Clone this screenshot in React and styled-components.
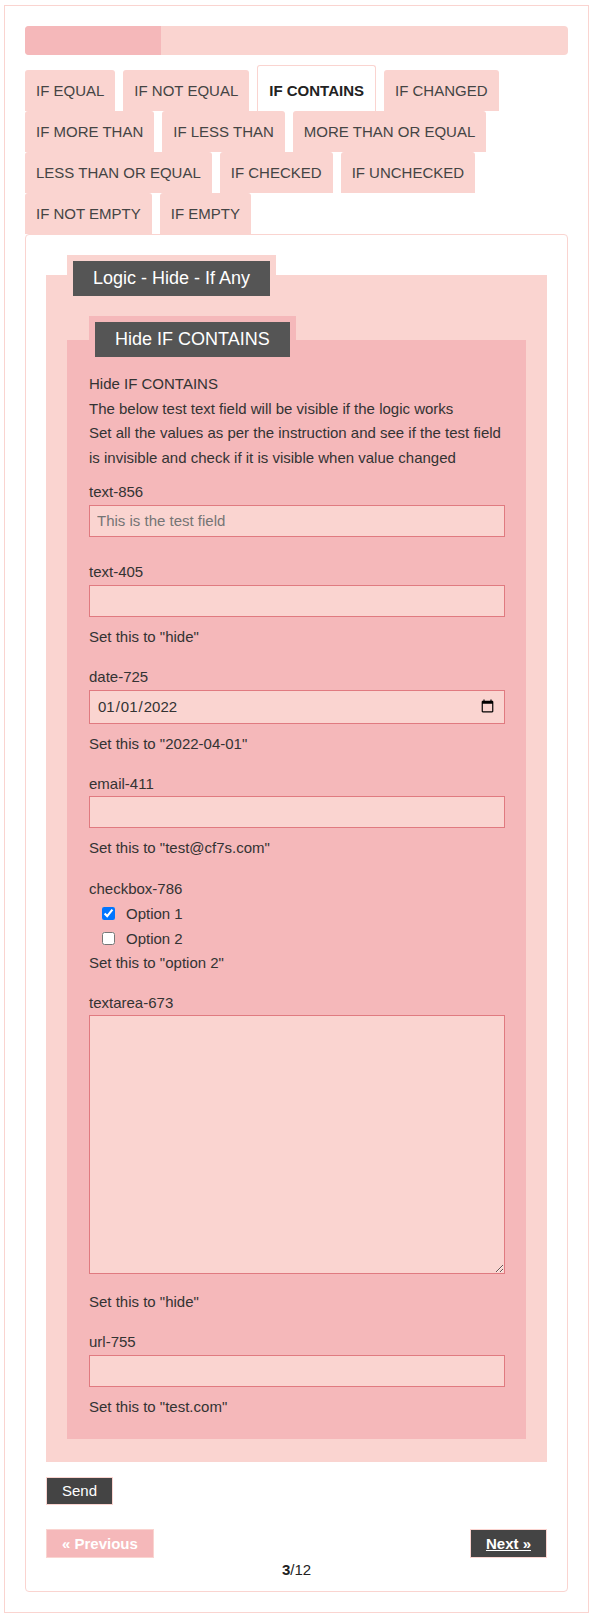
import React from "react";
import styled, { createGlobalStyle } from "styled-components";

const tabs = [
    "IF EQUAL",
    "IF NOT EQUAL",
    "IF CONTAINS",
    "IF CHANGED",
    "IF MORE THAN",
    "IF LESS THAN",
    "MORE THAN OR EQUAL",
    "LESS THAN OR EQUAL",
    "IF CHECKED",
    "IF UNCHECKED",
    "IF NOT EMPTY",
    "IF EMPTY",
];

function App() {
    return (
        <>
            <GlobalStyle />
            <Frame>
                <Progress>
                    <ProgressFill style={{ width: `${(3 / 12) * 100}%` }} />
                </Progress>
                <TabList>
                    {tabs.map((t) => (
                        <Tab key={t} $active={t === "IF CONTAINS"}>
                            {t}
                        </Tab>
                    ))}
                </TabList>
                <Panel>
                    <OuterSet>
                        <OuterLegend>
                            <LegendBox>Logic - Hide - If Any</LegendBox>
                        </OuterLegend>
                        <InnerSet>
                            <InnerLegend>
                                <LegendBox>Hide IF CONTAINS</LegendBox>
                            </InnerLegend>
                            <Intro>
                                Hide IF CONTAINS
                                <br />
                                The below test text field will be visible if the logic works
                                <br />
                                Set all the values as per the instruction and see if the test field
                                is invisible and check if it is visible when value changed
                            </Intro>

                            <Field>
                                <Label>text-856</Label>
                                <Input type="text" placeholder="This is the test field" />
                            </Field>

                            <Field>
                                <Label>text-405</Label>
                                <Input type="text" />
                                <Help>Set this to "hide"</Help>
                            </Field>

                            <Field>
                                <Label>date-725</Label>
                                <Input type="date" defaultValue="2022-01-01" $tall />
                                <Help>Set this to "2022-04-01"</Help>
                            </Field>

                            <Field>
                                <Label>email-411</Label>
                                <Input type="email" />
                                <Help>Set this to "test@cf7s.com"</Help>
                            </Field>

                            <Field>
                                <Label>checkbox-786</Label>
                                <Option>
                                    <Check type="checkbox" defaultChecked />
                                    <span>Option 1</span>
                                </Option>
                                <Option>
                                    <Check type="checkbox" />
                                    <span>Option 2</span>
                                </Option>
                                <Help>Set this to "option 2"</Help>
                            </Field>

                            <Field>
                                <Label>textarea-673</Label>
                                <TextArea />
                                <Help>Set this to "hide"</Help>
                            </Field>

                            <Field>
                                <Label>url-755</Label>
                                <Input type="url" />
                                <Help>Set this to "test.com"</Help>
                            </Field>
                        </InnerSet>
                    </OuterSet>

                    <SendButton type="button">Send</SendButton>

                    <NavRow>
                        <NavButton $prev>« Previous</NavButton>
                        <NavButton href="#next">Next »</NavButton>
                    </NavRow>
                    <PageCount>
                        <b>3</b>/12
                    </PageCount>
                </Panel>
            </Frame>
        </>
    );
}

export default App;

const GlobalStyle = createGlobalStyle`
    * {
        box-sizing: border-box;
    }
    body {
        margin: 0;
        background: #fff;
        font-family: "Liberation Sans", Arial, sans-serif;
        font-size: 15px;
        color: #333;
    }
`;
const Frame = styled.div`
    margin: 5px 0 10px 4px;
    width: 585px;
    border: 1px solid #fad4d0;
    padding: 20px;
`;
const Progress = styled.div`
    height: 29px;
    border-radius: 4px;
    background-color: #fad4d0;
    overflow: hidden;
`;
const ProgressFill = styled.div`
    height: 100%;
    background-color: #f5b8ba;
`;
const TabList = styled.div`
    margin-top: 10px;
    display: flex;
    flex-wrap: wrap;
    align-items: flex-end;
    column-gap: 8px;
`;
const Tab = styled.div`
    height: ${(p) => (p.$active ? "46px" : "41px")};
    line-height: ${(p) => (p.$active ? "40px" : "41px")};
    padding: ${(p) => (p.$active ? "5px 11px 0" : "0 11px")};
    border-radius: 3px 3px 0 0;
    font-size: 15px;
    white-space: nowrap;
    cursor: pointer;
    color: ${(p) => (p.$active ? "#222" : "#444")};
    font-weight: ${(p) => (p.$active ? "bold" : "normal")};
    background-color: ${(p) => (p.$active ? "#fff" : "#fad4d0")};
    border: ${(p) => (p.$active ? "1px solid #fad4d0" : "0")};
    border-bottom: 0;
`;
const Panel = styled.div`
    border: 1px solid #fad4d0;
    border-radius: 4px;
    padding: 20px 20px 9px;
`;
const OuterSet = styled.fieldset`
    margin: 0;
    min-width: 0;
    padding: 14px 21px 23px;
    border: 0;
    border-top: 7px solid #fad4d0;
    background-color: #fad4d0;
`;
const OuterLegend = styled.legend`
    padding: 6px;
    background-color: #fad4d0;
`;
const InnerSet = styled.fieldset`
    margin: 0;
    min-width: 0;
    padding: 9px 21px 4px 22px;
    border: 0;
    background-color: #f5b8ba;
`;
const InnerLegend = styled.legend`
    padding: 6px;
    background-color: #f5b8ba;
`;
const LegendBox = styled.span`
    display: block;
    background-color: #555;
    color: #fff;
    font-size: 18px;
    line-height: 35px;
    padding: 0 20px;
`;
const Intro = styled.p`
    margin: 0 0 10px;
    line-height: 24.6px;
`;
const Field = styled.div`
    display: flow-root;
    margin-bottom: 15.5px;
`;
const Label = styled.label`
    display: block;
    line-height: 24.6px;
`;
const Input = styled.input`
    display: block;
    width: 100%;
    height: ${(p) => (p.$tall ? "34px" : "32px")};
    margin: 0 0 8px;
    padding: 0 7px;
    border: 1px solid #e07a80;
    border-radius: 0;
    background-color: #fad4d0;
    font-family: "Liberation Sans", Arial, sans-serif;
    font-size: 15px;
    color: #333;
    outline: none;
`;
const TextArea = styled.textarea`
    display: block;
    width: 100%;
    height: 259px;
    margin: 0 0 16px;
    padding: 6px 7px;
    border: 1px solid #e07a80;
    background-color: #fad4d0;
    font-family: "Liberation Sans", Arial, sans-serif;
    font-size: 15px;
    color: #333;
`;
const Help = styled.div`
    line-height: 24.6px;
`;
const Option = styled.label`
    display: flex;
    align-items: center;
    height: 24.7px;
    padding-left: 12px;
`;
const Check = styled.input`
    width: 13px;
    height: 13px;
    margin: 0 11px 0 1px;
`;
const SendButton = styled.button`
    margin-top: 15px;
    display: block;
    height: 28px;
    padding: 0 15px;
    border: 1px solid #fad4d0;
    border-radius: 0;
    background-color: #444;
    color: #fff;
    font-family: "Liberation Sans", Arial, sans-serif;
    font-size: 15px;
    cursor: pointer;
`;
const NavRow = styled.div`
    margin-top: 24px;
    display: flex;
    justify-content: space-between;
`;
const NavButton = styled.a`
    display: block;
    height: 29px;
    line-height: 27px;
    padding: 0 15px;
    border: 1px solid #fad4d0;
    background-color: ${(p) => (p.$prev ? "#f5b8ba" : "#444")};
    color: #fff;
    font-weight: bold;
    font-size: 15px;
    text-decoration: ${(p) => (p.$prev ? "none" : "underline")};
`;
const PageCount = styled.div`
    text-align: center;
    line-height: 24px;
    color: #222;
`;
